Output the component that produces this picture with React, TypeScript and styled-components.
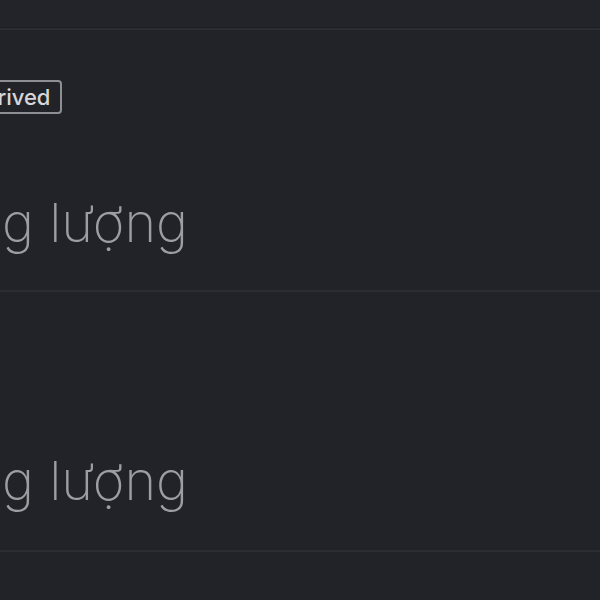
import styled, { createGlobalStyle } from "styled-components";

const GlobalStyle = createGlobalStyle`
  html, body {
    margin: 0;
    padding: 0;
    background: #222328;
  }
`;

const Page = styled.div`
  width: 600px;
  height: 600px;
  overflow: hidden;
  background: #222328;
  font-family: Inter, "Noto Sans", sans-serif;
`;

const TopBar = styled.div`
  height: 27px;
  background: #232429;
  border-bottom: 1px solid #1d1e22;
`;

const List = styled.div`
  display: flex;
  flex-direction: column;
  border-top: 2px solid #2c2d32;
`;

const Row = styled.div<{ $compact?: boolean }>`
  display: flex;
  flex-direction: column;
  padding: ${(p) => (p.$compact ? "46px 0 34px 0" : "50px 0 32px 0")};
  border-bottom: 2px solid #2c2d32;
`;

const BadgeSlot = styled.div`
  height: 36px;
  display: flex;
  align-items: flex-start;
  margin-left: -37px;
`;

const Badge = styled.span`
  display: inline-flex;
  align-items: center;
  box-sizing: border-box;
  height: 34px;
  padding: 0 10px 0 8px;
  border: 2px solid #8e8f93;
  border-radius: 4px;
  color: #d6d6d8;
  font-size: 22px;
  font-weight: 500;
`;

const Title = styled.div`
  margin-top: 72px;
  margin-left: -100px;
  font-size: 54px;
  line-height: 70px;
  font-weight: 200;
  color: #9d9ea2;
  white-space: nowrap;
`;

const items = [
  { title: "Năng lượng", badge: "Arrived" },
  { title: "Năng lượng", badge: "" },
];

export default function App() {
  return (
    <Page>
      <GlobalStyle />
      <TopBar />
      <List>
        {items.map((item, i) => (
          <Row key={i} $compact={!item.badge}>
            <BadgeSlot>{item.badge && <Badge>{item.badge}</Badge>}</BadgeSlot>
            <Title>{item.title}</Title>
          </Row>
        ))}
      </List>
    </Page>
  );
}
